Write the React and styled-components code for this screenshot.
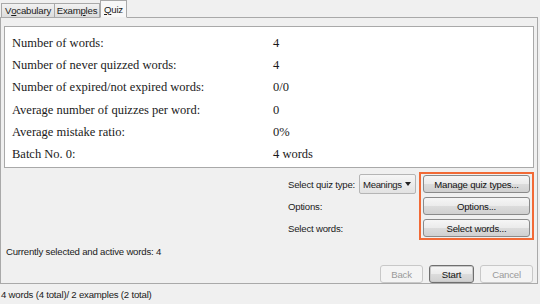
import React from 'react';
import styled, { createGlobalStyle } from 'styled-components';

const Global = createGlobalStyle`
  html, body { margin: 0; padding: 0; background: #f0f0f0; }
  body { width: 540px; height: 304px; overflow: hidden; font-family: "Liberation Sans", Arial, sans-serif; font-size: 9.6px; letter-spacing: -0.2px; color: #1a1a1a; }
`;

const Window = styled.div`
  width: 540px;
  height: 304px;
  display: flex;
  flex-direction: column;
  white-space: nowrap;
`;

const TabBar = styled.div`
  display: flex;
  align-items: flex-end;
  height: 17px;
  padding-left: 1px;
  position: relative;
  z-index: 1;
`;

const Tab = styled.div`
  height: ${(p) => (p.$active ? '18px' : '15px')};
  width: ${(p) => p.$w};
  justify-content: center;
  display: flex;
  align-items: center;
  border: 1px solid #a9a9a9;
  border-bottom: ${(p) => (p.$active ? '1px solid #f0f0f0' : '1px solid #a9a9a9')};
  margin-bottom: -1px;
  margin-left: ${(p) => (p.$active ? '0' : '-1px')};
  background: ${(p) => (p.$active ? '#f8f8f8' : 'linear-gradient(#f2f2f2, #dcdcdc)')};
  box-sizing: border-box;
  &:first-child { margin-left: 0; }
`;

const Pane = styled.div`
  margin: 0 2px 0 0;
  border: 1px solid #a9a9a9;
  height: 267px;
  box-sizing: border-box;
  padding: 8px 3px 0 3px;
  display: flex;
  flex-direction: column;
`;

const StatsBox = styled.div`
  background: #fff;
  border: 1px solid #a9a9a9;
  height: 146px;
  box-sizing: border-box;
  padding: 5px 0 0 7px;
  display: flex;
  flex-direction: column;
  font-family: "Liberation Serif", "Times New Roman", serif;
  font-size: 12.5px;
  letter-spacing: 0;
`;

const StatRow = styled.div`
  display: grid;
  grid-template-columns: 261px 1fr;
  height: 22.3px;
  align-items: center;
`;

const Controls = styled.div`
  display: flex;
  justify-content: flex-end;
  margin-top: 4px;
`;

const LabelsCol = styled.div`
  display: flex;
  flex-direction: column;
  gap: 4px;
  padding-top: 3px;
  margin-right: 5px;
`;

const LabelLine = styled.div`
  height: 18px;
  display: flex;
  align-items: center;
  gap: 4px;
  width: 126px;
`;

const Combo = styled.div`
  width: 57px;
  height: 20px;
  box-sizing: border-box;
  border: 1px solid #b5b5b5;
  border-radius: 2px;
  background: linear-gradient(#f6f6f6, #e2e2e2);
  display: flex;
  align-items: center;
  justify-content: space-between;
  padding: 0 4px 0 3px;
  letter-spacing: -0.35px;
`;

const Arrow = styled.span`
  width: 0;
  height: 0;
  margin-left: 3px;
  border-left: 3.5px solid transparent;
  border-right: 3.5px solid transparent;
  border-top: 4px solid #222;
`;

const Highlight = styled.div`
  border: 2px solid #f26a36;
  padding: 1px 2px;
  display: flex;
  flex-direction: column;
  gap: 4px;
  width: 115px;
  box-sizing: border-box;
`;

const Button = styled.div`
  height: 18px;
  box-sizing: border-box;
  border: 1px solid ${(p) => (p.$disabled ? '#c8c8c8' : p.$default ? '#6f6f6f' : '#8a8a8a')};
  border-radius: 3px;
  background: ${(p) => (p.$disabled ? '#f4f4f4' : 'linear-gradient(#f6f6f6 0%, #ebebeb 50%, #dcdcdc 51%, #d0d0d0 100%)')};
  color: ${(p) => (p.$disabled ? '#9a9a9a' : '#111')};
  display: flex;
  align-items: center;
  justify-content: center;
  width: ${(p) => p.$w || 'auto'};
  box-shadow: ${(p) => (p.$default ? 'inset 0 0 0 1px #c9c9c9' : 'none')};
`;

const ActiveLine = styled.div`
  margin-top: 4px;
  padding-left: 2px;
  height: 14px;
  display: flex;
  align-items: center;
`;

const Footer = styled.div`
  display: flex;
  justify-content: flex-end;
  gap: 6px;
  margin-top: 7px;
  padding-right: 1px;
`;

const StatusBar = styled.div`
  height: 20px;
  display: flex;
  align-items: center;
  padding-left: 1px;
`;

const stats = [
  ['Number of words:', '4'],
  ['Number of never quizzed words:', '4'],
  ['Number of expired/not expired words:', '0/0'],
  ['Average number of quizzes per word:', '0'],
  ['Average mistake ratio:', '0%'],
  ['Batch No. 0:', '4 words'],
];

export default function App() {
  return (
    <Window>
      <Global />
      <TabBar>
        <Tab $w="54px">V<u>o</u>cabulary</Tab>
        <Tab $w="46px">Exam<u>p</u>les</Tab>
        <Tab $active $w="27px"><u>Q</u>uiz</Tab>
      </TabBar>
      <Pane>
        <StatsBox>
          {stats.map(([k, v]) => (
            <StatRow key={k}>
              <span>{k}</span>
              <span>{v}</span>
            </StatRow>
          ))}
        </StatsBox>
        <Controls>
          <LabelsCol>
            <LabelLine>
              Select quiz type:
              <Combo>
                Meanings
                <Arrow />
              </Combo>
            </LabelLine>
            <LabelLine>Options:</LabelLine>
            <LabelLine>Select words:</LabelLine>
          </LabelsCol>
          <Highlight>
            <Button>Manage quiz types...</Button>
            <Button>Options...</Button>
            <Button>Select words...</Button>
          </Highlight>
        </Controls>
        <ActiveLine>Currently selected and active words: 4</ActiveLine>
        <Footer>
          <Button $disabled $w="43px">Back</Button>
          <Button $default $w="45px">Start</Button>
          <Button $disabled $w="53px">Cancel</Button>
        </Footer>
      </Pane>
      <StatusBar>4 words (4 total)/ 2 examples (2 total)</StatusBar>
    </Window>
  );
}
